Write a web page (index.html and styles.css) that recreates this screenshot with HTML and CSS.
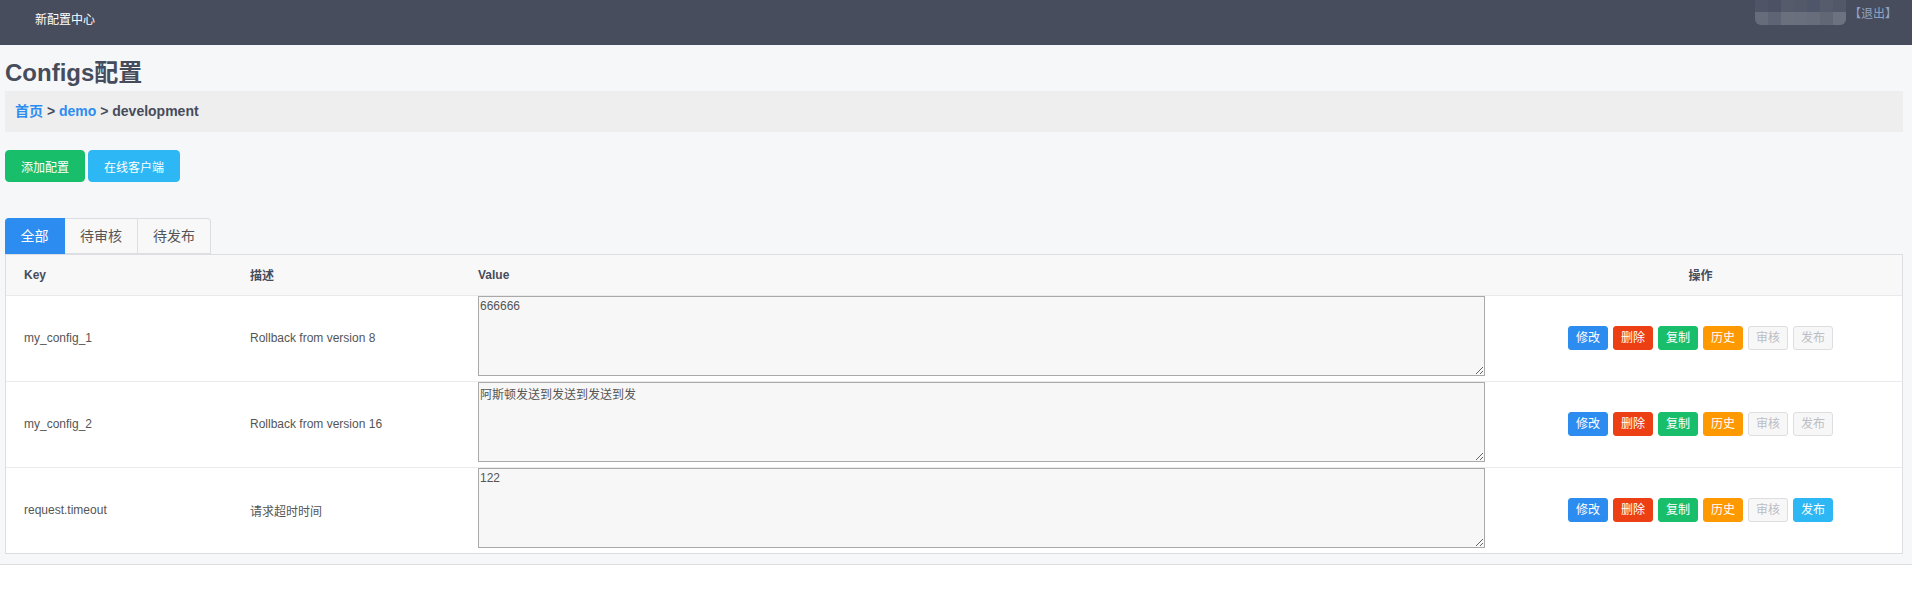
FILE: index.html
```html
<!DOCTYPE html>
<html lang="zh">
<head>
<meta charset="utf-8">
<title>Configs配置</title>
<link rel="stylesheet" href="styles.css">
</head>
<body>
<header class="topbar">
  <div class="brand">新配置中心</div>
  <div class="user">
    <div class="mosaic">
      <span class="m1"></span><span class="m2"></span><span class="m3"></span><span class="m4"></span><span class="m5"></span><span class="m6"></span><span class="m7"></span>
      <span class="n1"></span><span class="n2"></span><span class="n3"></span><span class="n4"></span><span class="n5"></span><span class="n6"></span><span class="n7"></span>
    </div>
    <a class="logout">【退出】</a>
  </div>
</header>
<main class="page">
  <h2 class="title">Configs配置</h2>
  <div class="crumbs"><a class="link">首页</a> &gt; <a class="link">demo</a> &gt; development</div>
  <div class="actions">
    <button class="btn btn-green">添加配置</button>
    <button class="btn btn-sky">在线客户端</button>
  </div>
  <div class="tabs">
    <div class="tab active">全部</div>
    <div class="tab">待审核</div>
    <div class="tab last">待发布</div>
  </div>
  <div class="panel">
    <table class="grid">
      <colgroup>
        <col class="c-key"><col class="c-desc"><col class="c-val"><col class="c-op">
      </colgroup>
      <thead>
        <tr><th>Key</th><th>描述</th><th>Value</th><th class="center">操作</th></tr>
      </thead>
      <tbody>
        <tr>
          <td>my_config_1</td>
          <td>Rollback from version 8</td>
          <td class="val"><textarea class="ta">666666</textarea></td>
          <td class="ops">
            <span class="sb blue">修改</span><span class="sb red">删除</span><span class="sb green">复制</span><span class="sb orange">历史</span><span class="sb dis">审核</span><span class="sb dis">发布</span>
          </td>
        </tr>
        <tr>
          <td>my_config_2</td>
          <td>Rollback from version 16</td>
          <td class="val"><textarea class="ta">阿斯顿发送到发送到发送到发</textarea></td>
          <td class="ops">
            <span class="sb blue">修改</span><span class="sb red">删除</span><span class="sb green">复制</span><span class="sb orange">历史</span><span class="sb dis">审核</span><span class="sb dis">发布</span>
          </td>
        </tr>
        <tr>
          <td>request.timeout</td>
          <td>请求超时时间</td>
          <td class="val"><textarea class="ta">122</textarea></td>
          <td class="ops">
            <span class="sb blue">修改</span><span class="sb red">删除</span><span class="sb green">复制</span><span class="sb orange">历史</span><span class="sb dis">审核</span><span class="sb sky">发布</span>
          </td>
        </tr>
      </tbody>
    </table>
  </div>
</main>
</body>
</html>
```
FILE: styles.css
```css
* { box-sizing: border-box; }
html, body { margin: 0; padding: 0; background: #fff; }
body {
  font-family: "Liberation Sans", Arial, "Noto Sans CJK SC", sans-serif;
  font-size: 12px;
  color: #555;
}
.topbar {
  height: 45px;
  background: #474d5d;
  display: flex;
  justify-content: space-between;
  align-items: flex-start;
}
.brand {
  color: #fff;
  font-size: 12px;
  line-height: 40px;
  padding-left: 35px;
}
.user {
  display: flex;
  align-items: flex-start;
  padding-right: 15px;
}
.mosaic {
  width: 91px;
  height: 25px;
  display: grid;
  grid-template-columns: 13px 13px 13px 13px 13px 13px 13px;
  grid-template-rows: 12px 13px;
  border-radius: 0 0 6px 6px;
  overflow: hidden;
}
.mosaic span { display: block; }
.m1 { background: #4f5566; } .m2 { background: #4c5264; } .m3 { background: #555b6b; }
.m4 { background: #535969; } .m5 { background: #50566a; } .m6 { background: #565c6c; } .m7 { background: #535869; }
.n1 { background: #676c7a; } .n2 { background: #5f6474; } .n3 { background: #6b707e; }
.n4 { background: #6a6f7d; } .n5 { background: #686d7b; } .n6 { background: #626776; } .n7 { background: #6d7280; }
.logout {
  color: #8fa3c0;
  font-size: 12px;
  line-height: 28px;
  margin-left: 3px;
}
.page {
  background: #f5f7f9;
  padding: 13px 9px 10px 5px;
  border-bottom: 1px solid #dddee1;
}
.title {
  margin: 0 0 3px;
  font-size: 24px;
  line-height: 30px;
  font-weight: bold;
  color: #464c5b;
}
.crumbs {
  background: #eeeeee;
  height: 41px;
  line-height: 40px;
  padding: 0 10px;
  font-size: 14px;
  font-weight: bold;
  color: #464c5b;
}
.link { color: #2d8cf0; }
.actions {
  margin-top: 18px;
  display: flex;
  gap: 3px;
}
.btn {
  height: 32px;
  padding: 0 15px;
  border: 1px solid transparent;
  border-radius: 4px;
  color: #fff;
  font: 12px "Liberation Sans", "Noto Sans CJK SC", sans-serif;
}
.btn-green { background: #19be6b; border-color: #19be6b; width: 80px; }
.btn-sky { background: #2db7f5; border-color: #2db7f5; width: 92px; }
.tabs {
  margin-top: 36px;
  display: flex;
}
.tab {
  height: 36px;
  line-height: 34px;
  font-size: 14px;
  color: #555;
  border: 1px solid #dddee1;
  border-left: none;
  background: #f8f8f9;
  padding: 0 15px;
  text-align: center;
}
.tab.active {
  background: #2d8cf0;
  border-color: #2d8cf0;
  color: #fff;
  width: 60px;
  border-radius: 4px 0 0 0;
}
.tab.last { border-radius: 0 4px 0 0; }
.tab:nth-child(2) { width: 73px; }
.tab:nth-child(3) { width: 73px; }
.panel {
  border: 1px solid #dddee1;
  background: #fff;
}
.grid {
  width: 100%;
  border-collapse: collapse;
  table-layout: fixed;
}
.c-key { width: 226px; }
.c-desc { width: 228px; }
.c-val { width: 1043px; }
.grid th {
  background: #f8f8f9;
  height: 40px;
  text-align: left;
  padding: 0 18px;
  font-weight: bold;
  color: #464c5b;
  border-bottom: 1px solid #e9eaec;
}
.grid th.center { text-align: center; padding: 0 22px 0 18px; }
.grid td {
  height: 86px;
  padding: 0 18px;
  border-bottom: 1px solid #e9eaec;
  color: #555;
  vertical-align: middle;
}
.grid tbody tr:last-child td { border-bottom: none; }
.grid td.val {
  vertical-align: top;
  padding-top: 0;
}
.ta {
  display: block;
  width: 1007px;
  height: 80px;
  border: 1px solid #a9a9a9;
  background: #f7f7f7;
  color: #555;
  font: 12px "Liberation Sans", "Noto Sans CJK SC", sans-serif;
  padding: 2px 1px;
  margin: 0;
}
.grid td.ops {
  text-align: center;
  white-space: nowrap;
  font-size: 0;
  padding: 0 22px 0 18px;
}
.sb {
  display: inline-block;
  width: 40px;
  height: 24px;
  line-height: 22px;
  font-size: 12px;
  border-radius: 3px;
  border: 1px solid transparent;
  color: #fff;
  margin: 0 2.5px;
  text-align: center;
  vertical-align: middle;
}
.blue { background: #2d8cf0; border-color: #2d8cf0; }
.red { background: #ed3f14; border-color: #ed3f14; }
.green { background: #19be6b; border-color: #19be6b; }
.orange { background: #ff9900; border-color: #ff9900; }
.sky { background: #2db7f5; border-color: #2db7f5; }
.dis { background: #f7f7f7; border-color: #dddee1; color: #bbbec4; }
```
